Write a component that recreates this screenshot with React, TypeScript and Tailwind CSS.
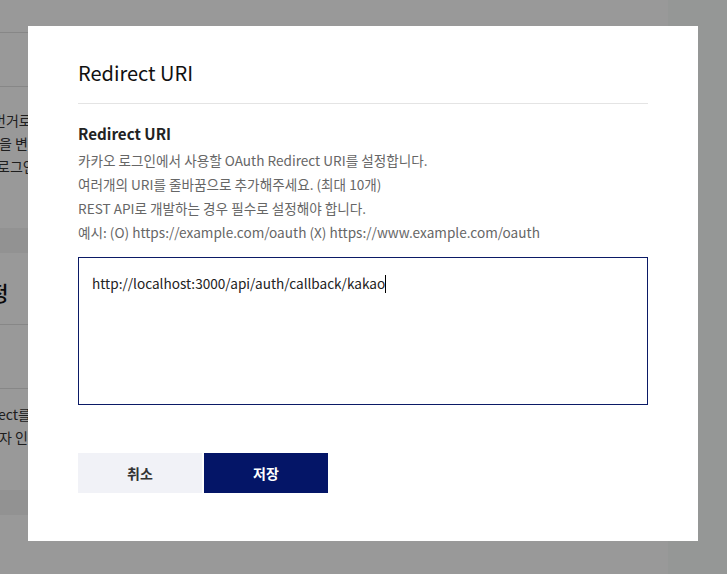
import React from "react";

export default function App() {
  return (
    <div
      className="relative w-[727px] h-[574px] overflow-hidden bg-white"
      style={{ fontFamily: '"Noto Sans CJK KR", "Noto Sans", sans-serif' }}
    >
      {/* Underlying page */}
      <div className="flex h-full">
        <div className="w-[668px] h-full flex flex-col text-[14px] text-[#333] overflow-hidden">
          <div className="h-[33px] border-b border-[#e2e2e2] shrink-0" />
          <div className="h-[54px] border-b border-[#e2e2e2] shrink-0" />
          <div className="pt-[22px] leading-[23px] flex flex-col shrink-0 h-[141px]">
            <span className="-ml-[7px] whitespace-nowrap">번거로움 없이</span>
            <span className="-ml-[1px] whitespace-nowrap">을 변경할 수</span>
            <span className="-ml-[3px] whitespace-nowrap">로그인 설정</span>
          </div>
          <div className="h-[25px] bg-[#f4f4f4] shrink-0" />
          <div className="h-[72px] border-b border-[#e2e2e2] shrink-0 flex items-end pb-[18px]">
            <span className="-ml-[30px] text-[21px] font-medium text-[#111] leading-[28px] whitespace-nowrap">
              설정
            </span>
          </div>
          <div className="h-[64px] border-b border-[#e2e2e2] shrink-0" />
          <div className="pt-[14px] leading-[23px] flex flex-col shrink-0 h-[101px]">
            <span className="-ml-[2px] whitespace-nowrap">ect를 사용</span>
            <span className="-ml-[1px] whitespace-nowrap">자 인증</span>
          </div>
          <div className="h-[25px] bg-[#f4f4f4] shrink-0" />
          <div className="flex-1" />
        </div>
        <div className="flex-1 h-full bg-[#f8fcfa]" />
      </div>

      {/* Overlay */}
      <div className="absolute inset-0 bg-black/40" />

      {/* Modal */}
      <div className="absolute left-[28px] top-[26px] w-[670px] h-[515px] bg-white px-[50px] pt-[33px] pb-[48px] flex flex-col">
        <div className="pb-[16px] border-b border-[#e4e4e4]">
          <h1 className="text-[20px] leading-[28px] text-[#111] font-normal">Redirect URI</h1>
        </div>
        <h2 className="mt-[17px] text-[15.2px] leading-[24px] font-bold text-[#222]">Redirect URI</h2>
        <div className="mt-[3px] text-[13.6px] leading-[24px] text-[#666]">
          <p>카카오 로그인에서 사용할 OAuth Redirect URI를 설정합니다.</p>
          <p>여러개의 URI를 줄바꿈으로 추가해주세요. (최대 10개)</p>
          <p>REST API로 개발하는 경우 필수로 설정해야 합니다.</p>
          <p>예시: (O) https://example.com/oauth (X) https://www.example.com/oauth</p>
        </div>
        <div className="mt-[13px] h-[148px] border border-[#0b1a66] px-[13px] pt-[13px] text-[13.6px] leading-[24px] text-[#222]">
          <span>http://localhost:3000/api/auth/callback/kakao</span>
          <span className="inline-block w-[1px] h-[18px] bg-black align-[-4px]" />
        </div>
        <div className="mt-[48px] flex gap-[2px]">
          <button className="w-[124px] h-[40px] bg-[#f1f2f7] text-[14px] font-bold text-[#333]">
            취소
          </button>
          <button className="w-[124px] h-[40px] bg-[#041567] text-[14px] font-bold text-white">
            저장
          </button>
        </div>
      </div>
    </div>
  );
}
